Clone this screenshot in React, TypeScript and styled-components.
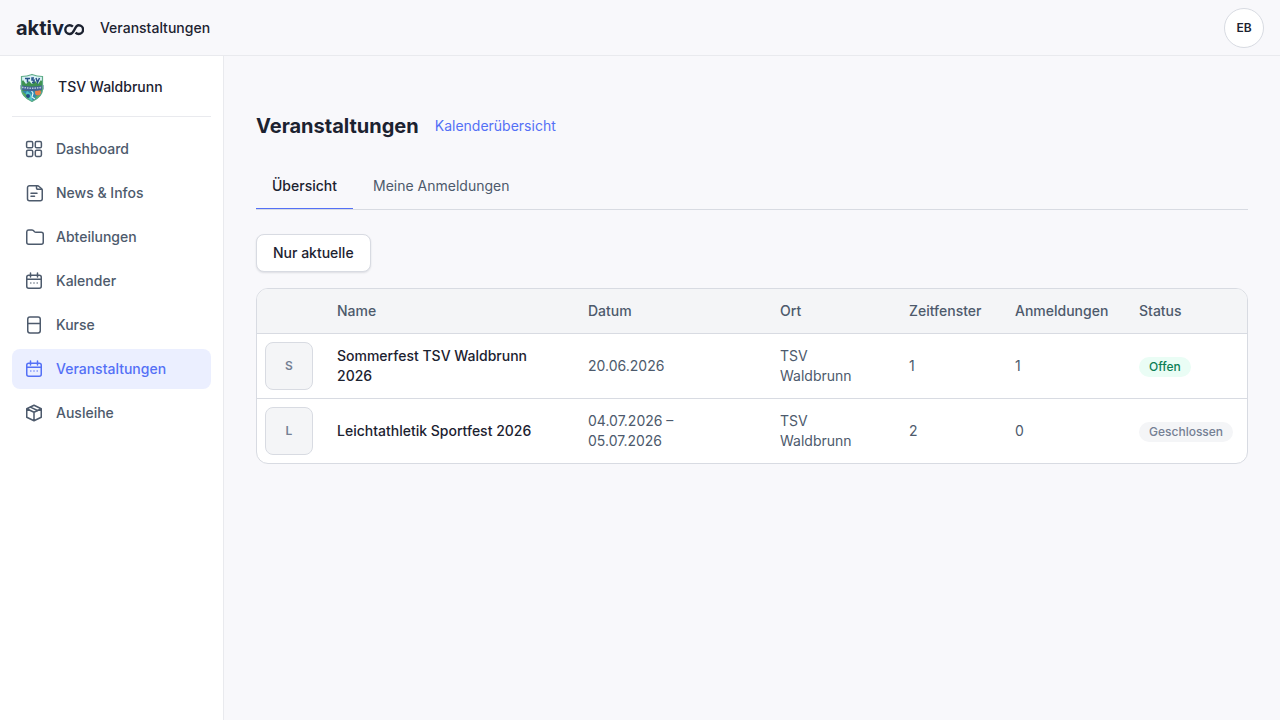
import React from "react";
import styled, { createGlobalStyle, css } from "styled-components";

const color = {
  page: "#f8f8fb",
  surface: "#ffffff",
  muted: "#f4f5f7",
  line: "#d8dbe2",
  softLine: "#e9eaee",
  ink: "#1c2230",
  text: "#4d5a6c",
  faint: "#748094",
  accent: "#5470f6",
  accentSoft: "#ebefff",
};

const GlobalStyle = createGlobalStyle`
  *, *::before, *::after { box-sizing: border-box; }
  body {
    margin: 0;
    background: ${color.page};
    color: ${color.ink};
    font-family: Inter, "Liberation Sans", sans-serif;
    font-size: 14px;
    line-height: 20px;
  }
  button { font: inherit; color: inherit; cursor: pointer; }
  a { color: inherit; text-decoration: none; }
`;

const Page = styled.div`
  display: flex;
  flex-direction: column;
  min-height: 100vh;
`;

const TopBar = styled.header`
  display: flex;
  align-items: center;
  height: 56px;
  padding: 0 16px;
  gap: 16px;
  border-bottom: 1px solid ${color.softLine};
`;

const Brand = styled.a`
  display: flex;
  align-items: center;
  font-size: 20px;
  font-weight: 700;
  color: ${color.ink};
`;

const Crumb = styled.span`
  font-weight: 500;
`;

const Avatar = styled.button`
  width: 40px;
  height: 40px;
  margin-left: auto;
  padding: 0;
  border: 1px solid ${color.line};
  border-radius: 50%;
  background: ${color.surface};
  font-size: 12px;
  font-weight: 600;
`;

const Body = styled.div`
  display: flex;
  flex: 1;
`;

const Sidebar = styled.aside`
  flex: none;
  width: 224px;
  padding: 0 12px;
  background: ${color.surface};
  border-right: 1px solid ${color.softLine};
`;

const Club = styled.div`
  display: flex;
  align-items: center;
  gap: 12px;
  height: 61px;
  padding: 2px 8px 0;
  margin-bottom: 12px;
  border-bottom: 1px solid ${color.softLine};
  font-weight: 500;
`;

const Nav = styled.nav`
  display: flex;
  flex-direction: column;
  gap: 4px;
`;

const NavLink = styled.a<{ $active?: boolean }>`
  display: flex;
  align-items: center;
  gap: 12px;
  height: 40px;
  padding: 0 12px;
  border-radius: 8px;
  font-weight: 500;
  color: ${(p) => (p.$active ? color.accent : color.text)};
  background: ${(p) => (p.$active ? color.accentSoft : "transparent")};
`;

const Main = styled.main`
  flex: 1;
  min-width: 0;
  padding: 56px 32px;
`;

const TitleRow = styled.div`
  display: flex;
  align-items: center;
  gap: 16px;
  margin-bottom: 24px;
`;

const Title = styled.h1`
  margin: 0;
  font-size: 20px;
  line-height: 28px;
  font-weight: 700;
`;

const TextLink = styled.a`
  color: ${color.accent};
`;

const Tabs = styled.div`
  display: flex;
  gap: 4px;
  margin-bottom: 24px;
  border-bottom: 1px solid ${color.line};
`;

const Tab = styled.button<{ $active?: boolean }>`
  padding: 12px 16px;
  border: 0;
  border-bottom: 1px solid ${(p) => (p.$active ? color.accent : "transparent")};
  background: none;
  font-weight: ${(p) => (p.$active ? 500 : 400)};
  color: ${(p) => (p.$active ? color.ink : color.text)};
`;

const FilterButton = styled.button`
  display: block;
  margin-bottom: 16px;
  padding: 8px 16px;
  border: 1px solid ${color.line};
  border-radius: 8px;
  background: ${color.surface};
  box-shadow: 0 1px 2px rgba(28, 34, 48, 0.12);
  font-weight: 500;
`;

const TableFrame = styled.div`
  overflow: hidden;
  border: 1px solid ${color.line};
  border-radius: 12px;
  background: ${color.surface};
`;

const Table = styled.table`
  width: 100%;
  table-layout: fixed;
  border-collapse: separate;
  border-spacing: 0;
`;

const Col = styled.col<{ $width?: number }>`
  ${(p) => p.$width && css`width: ${p.$width}px;`}
`;

const HeadCell = styled.th`
  height: 45px;
  padding: 0 16px;
  background: ${color.muted};
  border-bottom: 1px solid ${color.line};
  font-weight: 500;
  text-align: left;
  color: ${color.text};
`;

const Row = styled.tr`
  &:not(:last-child) > td { border-bottom: 1px solid ${color.line}; }
`;

const Cell = styled.td<{ $strong?: boolean }>`
  padding: 8px 16px;
  font-weight: ${(p) => (p.$strong ? 500 : 400)};
  color: ${(p) => (p.$strong ? color.ink : color.text)};
`;

const ThumbCell = styled.td`
  padding: 8px;
`;

const Thumb = styled.div`
  display: flex;
  align-items: center;
  justify-content: center;
  width: 48px;
  height: 48px;
  border: 1px solid ${color.line};
  border-radius: 8px;
  background: ${color.muted};
  font-size: 12px;
  font-weight: 600;
  color: ${color.faint};
`;

const Badge = styled.span<{ $open: boolean }>`
  display: inline-block;
  padding: 0 10px;
  border-radius: 10px;
  font-size: 12px;
  font-weight: 500;
  color: ${(p) => (p.$open ? "#0d7f56" : color.faint)};
  background: ${(p) => (p.$open ? "#eafdf5" : color.muted)};
`;

const Icon = ({ children }: { children: React.ReactNode }) => (
  <svg width="20" height="20" viewBox="0 0 20 20" fill="none" stroke="currentColor" strokeWidth="1.5" strokeLinecap="round" strokeLinejoin="round" aria-hidden="true">
    {children}
  </svg>
);

const GridIcon = () => (
  <Icon>
    <rect x="2.6" y="2.6" width="6.1" height="6.1" rx="1.3" />
    <rect x="11.3" y="2.6" width="6.1" height="6.1" rx="1.3" />
    <rect x="2.6" y="11.3" width="6.1" height="6.1" rx="1.3" />
    <rect x="11.3" y="11.3" width="6.1" height="6.1" rx="1.3" />
  </Icon>
);

const NewsIcon = () => (
  <Icon>
    <path d="M12.8 2.75H5.5a2 2 0 0 0-2 2v11a2 2 0 0 0 2 2h10.75a2 2 0 0 0 2-2V7.2a2 2 0 0 0-.6-1.4l-2.600-2.300a2.500 2.500 0 0 0-1.700-.75Z" />
    <path d="M12.500 3v2a1.200 1.200 0 0 0 1.200 1.200h4M7 10.200h6M7 13.200h3.500" />
  </Icon>
);

const FolderIcon = () => (
  <Icon>
    <path d="M2.75 4.750v10.500a2 2 0 0 0 2 2h12.500a2 2 0 0 0 2-2V7.250a2 2 0 0 0-2-2h-5.400a2 2 0 0 1-1.300-.5l-1.200-1.200a2 2 0 0 0-1.400-.550H4.750a2 2 0 0 0-2 1.750Z" />
  </Icon>
);

const CalendarIcon = () => (
  <Icon>
    <rect x="2.75" y="4.25" width="14.5" height="13" rx="2" />
    <path d="M2.75 8.25h14.5M6.5 2v4M13.5 2v4" />
    <path d="M6 12h1.500M9.250 12h1.500M12.500 12H14" strokeWidth="1.700" strokeLinecap="butt" opacity="0.65" />
  </Icon>
);

const CourseIcon = () => (
  <Icon>
    <rect x="3.75" y="2" width="12.5" height="16" rx="2.2" />
    <path d="M3.75 8.5h12.5" />
  </Icon>
);

const BoxIcon = () => (
  <Icon>
    <path d="M10 2.300 17.250 5.700v8.600L10 17.700l-7.250-3.400V5.700L10 2.300ZM2.750 5.700 10 9.200l7.250-3.500M10 9.200v8.500" />
    <path d="m6.400 4.200 7.100 3.300" strokeWidth="1.400" />
  </Icon>
);

const MarkSvg = styled.svg`
  align-self: flex-end;
`;

const LoopMark = () => (
  <MarkSvg width="20" height="18" viewBox="0 0 20 18" fill="none" stroke="currentColor" strokeWidth="2.400" strokeLinecap="butt" aria-hidden="true">
    <path d="M8.900 6.600C8 5.700 7 5.200 5.700 5.200A4.400 4.400 0 0 0 5.700 14c2.400 0 3.600-1.900 4.700-4.300 1.100-2.500 2-4.500 4.300-4.500a4.400 4.400 0 0 1 0 8.800c-1.300 0-2.300-.5-3.200-1.400" />
  </MarkSvg>
);

const Crest = () => (
  <svg width="26" height="30" viewBox="1 -1 26 30" role="img" aria-label="TSV Waldbrunn">
    <defs>
      <clipPath id="shield">
        <path d="M2.500 3.500Q8 3.400 13 1.500q5 1.900 10.500 2v13c0 5.500-4.500 9-10.500 12C7 25.500 2.500 22 2.500 16.500Z" />
      </clipPath>
    </defs>
    <g clipPath="url(#shield)">
      <path fill="#d9f1f5" d="M0 0h26v30H0Z" />
      <path fill="#3f9150" d="M0 12 4 7l3 4 3-3 3 3 3-3 3 3 3-4 4 5v6H0Z" />
      <path fill="#3187ae" d="M0 18h26v12H0Z" />
      <path fill="#50c3ca" d="m8 18 4 3 2 8-9-5Z" />
      <path fill="#58a955" d="m3 18 7 6-1 3-7-5Z" />
      <circle cx="19" cy="19.500" r="3" fill="#e88049" />
      <circle cx="9" cy="23" r="2" fill="#244e87" />
      <path d="m12 17 2 3-1 4 3 2" stroke="#dff3f4" strokeWidth="1.200" fill="none" />
      <path d="m16 24 5-2-2 4Z" fill="#66b84d" />
    </g>
    <path d="M1.500 12q11.500 3 23 0v4.500q-11.500 3-23 0Z" fill="#426395" />
    <path d="M3 14.200q10 2 20 0" stroke="#b8c9dd" strokeWidth="1.500" strokeDasharray="1.500 1" fill="none" />
    <path d="M6 5.500h5M8.500 5.500v4M15 5h-2v2h2v2.500h-2M17 5l1.500 4.500L20.500 5" stroke="#285388" strokeWidth="1.500" fill="none" />
    <path d="M2.500 3.500Q8 3.400 13 1.500q5 1.900 10.500 2v13c0 5.500-4.500 9-10.500 12C7 25.500 2.500 22 2.500 16.500Z" fill="none" stroke="#5fac87" strokeWidth="1.200" />
  </svg>
);

const navItems = [
  { label: "Dashboard", icon: GridIcon },
  { label: "News & Infos", icon: NewsIcon },
  { label: "Abteilungen", icon: FolderIcon },
  { label: "Kalender", icon: CalendarIcon },
  { label: "Kurse", icon: CourseIcon },
  { label: "Veranstaltungen", icon: CalendarIcon, active: true },
  { label: "Ausleihe", icon: BoxIcon },
];

const events = [
  { name: "Sommerfest TSV Waldbrunn 2026", date: "20.06.2026", place: "TSV Waldbrunn", slots: 1, signups: 1, open: true },
  { name: "Leichtathletik Sportfest 2026", date: "04.07.2026 – 05.07.2026", place: "TSV Waldbrunn", slots: 2, signups: 0, open: false },
];

export default function App() {
  return (
    <Page>
      <GlobalStyle />
      <TopBar>
        <Brand href="#">aktiv<LoopMark /></Brand>
        <Crumb>Veranstaltungen</Crumb>
        <Avatar type="button">EB</Avatar>
      </TopBar>
      <Body>
        <Sidebar>
          <Club><Crest />TSV Waldbrunn</Club>
          <Nav>
            {navItems.map(({ label, icon: ItemIcon, active }) => (
              <NavLink key={label} href="#" $active={active} aria-current={active ? "page" : undefined}>
                <ItemIcon />
                {label}
              </NavLink>
            ))}
          </Nav>
        </Sidebar>
        <Main>
          <TitleRow>
            <Title>Veranstaltungen</Title>
            <TextLink href="#">Kalenderübersicht</TextLink>
          </TitleRow>
          <Tabs role="tablist">
            <Tab type="button" role="tab" aria-selected="true" $active>Übersicht</Tab>
            <Tab type="button" role="tab" aria-selected="false">Meine Anmeldungen</Tab>
          </Tabs>
          <FilterButton type="button">Nur aktuelle</FilterButton>
          <TableFrame>
            <Table>
              <colgroup>
                <Col $width={64} />
                <Col />
                <Col $width={192} />
                <Col $width={129} />
                <Col $width={106} />
                <Col $width={124} />
                <Col $width={124} />
              </colgroup>
              <thead>
                <tr>
                  <HeadCell />
                  <HeadCell>Name</HeadCell>
                  <HeadCell>Datum</HeadCell>
                  <HeadCell>Ort</HeadCell>
                  <HeadCell>Zeitfenster</HeadCell>
                  <HeadCell>Anmeldungen</HeadCell>
                  <HeadCell>Status</HeadCell>
                </tr>
              </thead>
              <tbody>
                {events.map((event) => (
                  <Row key={event.name}>
                    <ThumbCell><Thumb>{event.name[0]}</Thumb></ThumbCell>
                    <Cell $strong>{event.name}</Cell>
                    <Cell>{event.date}</Cell>
                    <Cell>{event.place}</Cell>
                    <Cell>{event.slots}</Cell>
                    <Cell>{event.signups}</Cell>
                    <Cell><Badge $open={event.open}>{event.open ? "Offen" : "Geschlossen"}</Badge></Cell>
                  </Row>
                ))}
              </tbody>
            </Table>
          </TableFrame>
        </Main>
      </Body>
    </Page>
  );
}
